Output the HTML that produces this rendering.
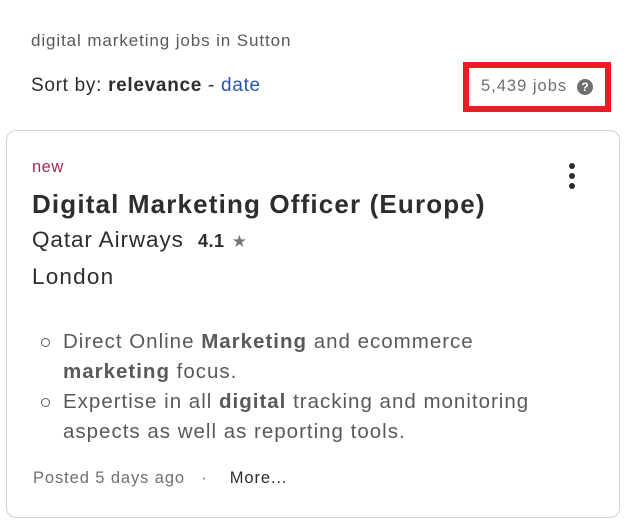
<!DOCTYPE html>
<html><head><style>
body{margin:0;width:628px;height:522px;background:#fff;font-family:"Liberation Sans",sans-serif;color:#2d2d2d;position:relative;overflow:hidden}
.a{position:absolute;white-space:nowrap}
</style></head><body>
<div class="a" style="left:31px;top:31px;font-size:17px;letter-spacing:0.9px;color:#595959;">digital marketing jobs in Sutton</div>
<div class="a" style="left:31px;top:75px;font-size:19px;letter-spacing:0.7px;color:#2d2d2d;">Sort by: <b>relevance</b> - <span style="color:#2557a7">date</span></div>
<div class="a" style="left:463px;top:62px;width:136px;height:38px;border:6px solid #ed1c24;"></div>
<div class="a" style="left:481px;top:77px;font-size:16.5px;letter-spacing:1px;color:#6f6f6f;">5,439 jobs</div>
<div class="a" style="left:577px;top:79px;width:16px;height:16px;border-radius:50%;background:#6f6f6f;color:#fff;font-size:12px;font-weight:bold;text-align:center;line-height:16px;">?</div>
<div class="a" style="left:6px;top:130px;width:612px;height:386px;border:1px solid #d4d2d0;border-radius:10px;"></div>
<div class="a" style="left:32px;top:158px;font-size:16.5px;letter-spacing:0.5px;color:#a5275b;">new</div>
<div class="a" style="left:569px;top:163px;width:6px;">
<div style="width:6px;height:6px;border-radius:50%;background:#2d2d2d;margin-bottom:4px"></div>
<div style="width:6px;height:6px;border-radius:50%;background:#2d2d2d;margin-bottom:4px"></div>
<div style="width:6px;height:6px;border-radius:50%;background:#2d2d2d"></div></div>
<div class="a" style="left:32px;top:189px;font-size:26px;font-weight:bold;letter-spacing:1.15px;">Digital Marketing Officer (Europe)</div>
<div class="a" style="left:32px;top:227px;font-size:22.5px;letter-spacing:0.9px;">Qatar Airways &nbsp;<b style="font-size:18px;letter-spacing:0.5px">4.1</b> <span style="color:#767676;font-size:17px">★</span></div>
<div class="a" style="left:32px;top:264px;font-size:22.5px;letter-spacing:1.2px;">London</div>
<div class="a" style="left:63px;top:327px;font-size:20.5px;letter-spacing:1px;color:#595959;line-height:30px;">
Direct Online <b>Marketing</b> and ecommerce<br><b>marketing</b> focus.<br>Expertise in all <b>digital</b> tracking and monitoring<br>aspects as well as reporting tools.</div>
<div class="a" style="left:41px;top:338px;width:7px;height:7px;border:1.5px solid #595959;border-radius:50%"></div>
<div class="a" style="left:41px;top:398px;width:7px;height:7px;border:1.5px solid #595959;border-radius:50%"></div>
<div class="a" style="left:33px;top:469px;font-size:16.5px;letter-spacing:0.9px;color:#6f6f6f;">Posted 5 days ago &nbsp;&nbsp;· &nbsp;&nbsp;&nbsp;<span style="color:#2d2d2d">More...</span></div>
</body></html>
